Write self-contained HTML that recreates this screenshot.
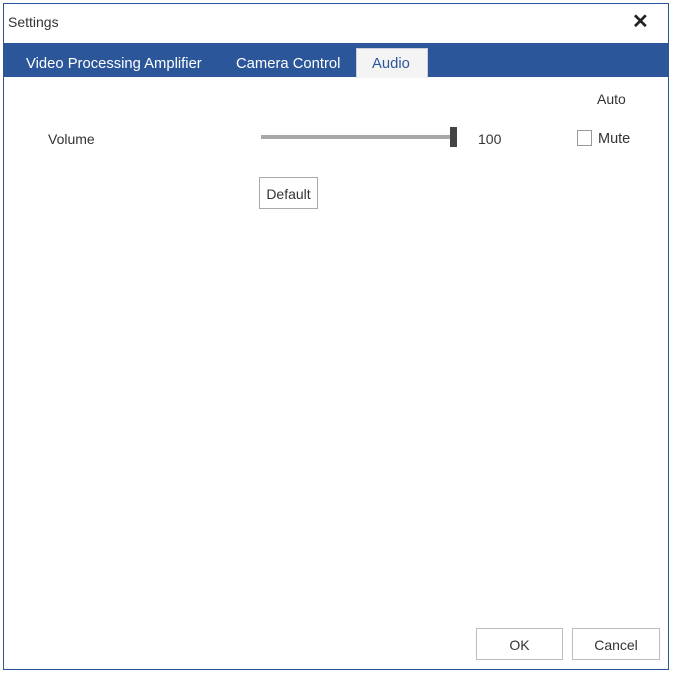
<!DOCTYPE html>
<html><head><style>
body{margin:0;width:673px;height:673px;background:#fff;position:relative;font-family:"Liberation Sans",sans-serif;font-size:14px;color:#333;overflow:hidden}
.a{position:absolute}
</style></head><body>
<div class="a" style="left:3px;top:3px;width:664px;height:665px;border:1px solid #2b579a"></div>
<div class="a" style="left:8px;top:14px;font-size:14px;color:#333">Settings</div>
<div class="a" style="left:632px;top:9px;font-size:20px;font-weight:bold;color:#222">✕</div>
<div class="a" style="left:4px;top:43px;width:664px;height:34px;background:#2b579a"></div>
<div class="a" style="left:26px;top:56px;color:#fff;font-size:14.8px">Video Processing Amplifier</div>
<div class="a" style="left:236px;top:56px;color:#fff;font-size:14.8px">Camera Control</div>
<div class="a" style="left:356px;top:48px;width:70px;height:29px;background:#f4f4f4;border:1px solid #ccd;border-bottom:none"></div>
<div class="a" style="left:372px;top:56px;color:#2b579a;font-size:14.8px">Audio</div>
<div class="a" style="left:597px;top:91px">Auto</div>
<div class="a" style="left:48px;top:131px">Volume</div>
<div class="a" style="left:261px;top:135px;width:196px;height:4px;background:#a8a8a8"></div>
<div class="a" style="left:450px;top:127px;width:7px;height:20px;background:#444"></div>
<div class="a" style="left:478px;top:131px">100</div>
<div class="a" style="left:577px;top:130px;width:15px;height:16px;border:1px solid #999;box-sizing:border-box"></div>
<div class="a" style="left:598px;top:131px;font-size:14.5px">Mute</div>
<div class="a" style="left:259px;top:177px;width:59px;height:32px;border:1px solid #aaa;box-sizing:border-box;text-align:center;line-height:33px">Default</div>
<div class="a" style="left:476px;top:628px;width:87px;height:32px;border:1px solid #bbb;box-sizing:border-box;text-align:center;line-height:32px">OK</div>
<div class="a" style="left:572px;top:628px;width:88px;height:32px;border:1px solid #bbb;box-sizing:border-box;text-align:center;line-height:32px">Cancel</div>
</body></html>
